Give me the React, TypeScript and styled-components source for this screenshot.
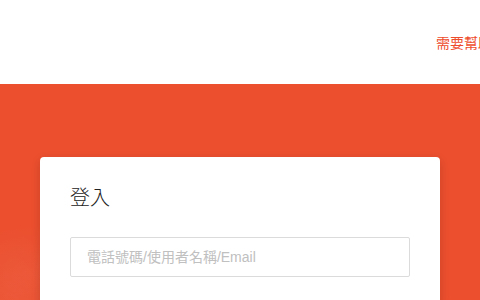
import React from 'react';
import styled, { createGlobalStyle } from 'styled-components';

const GlobalStyle = createGlobalStyle`
  html, body {
    margin: 0;
    padding: 0;
    background: #fff;
    font-family: "Noto Sans CJK TC", "Liberation Sans", sans-serif;
    overflow: hidden;
  }
`;

const Page = styled.div`
  width: 480px;
  height: 300px;
  display: flex;
  flex-direction: column;
  overflow: hidden;
`;

const Header = styled.header`
  height: 84px;
  flex-shrink: 0;
  background: #fff;
  display: flex;
  align-items: center;
  padding-left: 436px;
  white-space: nowrap;
`;

const HelpLink = styled.a`
  color: #ee4d2d;
  font-size: 14px;
  text-decoration: none;
  cursor: pointer;
`;

const Banner = styled.main`
  flex: 1;
  background:
    radial-gradient(ellipse 50px 110px at 10px 250px, rgba(255, 255, 255, 0.05), transparent),
    radial-gradient(ellipse 70px 50px at 30px 190px, rgba(255, 255, 255, 0.035), transparent),
    #eb4f2e;
  display: flex;
  justify-content: center;
  padding-top: 73px;
`;

const Card = styled.section`
  width: 400px;
  height: 200px;
  background: #fff;
  border-radius: 4px;
  box-shadow: 0 3px 10px rgba(0, 0, 0, 0.14);
  padding: 22px 30px 0;
  box-sizing: border-box;
`;

const Title = styled.h2`
  margin: 0;
  font-size: 20px;
  font-weight: 300;
  color: #222;
  line-height: 36px;
`;

const Input = styled.input`
  display: block;
  margin-top: 22px;
  width: 340px;
  height: 40px;
  box-sizing: border-box;
  border: 1px solid #dbdbdb;
  border-radius: 2px;
  padding: 0 16px;
  font-family: "Liberation Sans", "Noto Sans CJK TC", sans-serif;
  font-size: 14px;
  outline: none;

  &::placeholder {
    color: #c0c0c0;
  }
`;

export default function App() {
  return (
    <>
      <GlobalStyle />
      <Page>
        <Header>
          <HelpLink>需要幫助?</HelpLink>
        </Header>
        <Banner>
          <Card>
            <Title>登入</Title>
            <Input placeholder="電話號碼/使用者名稱/Email" />
          </Card>
        </Banner>
      </Page>
    </>
  );
}
